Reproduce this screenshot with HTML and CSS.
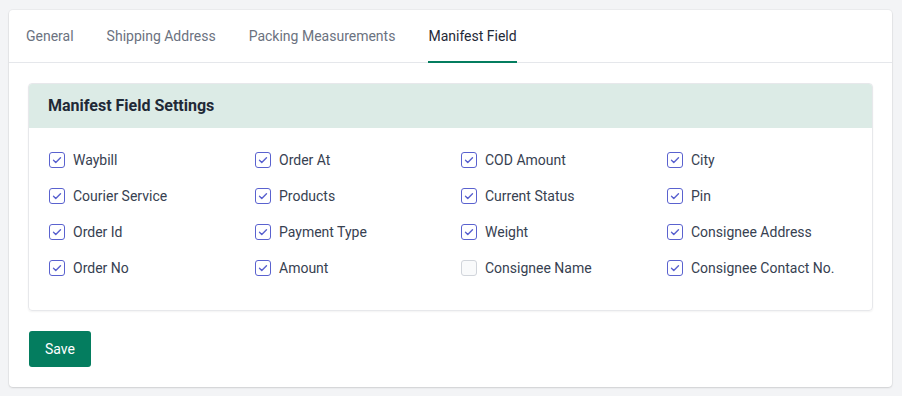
FILE: index.html
```html
<!DOCTYPE html>
<html>
	<head>
		<meta charset="UTF-8">
		<meta name="viewport" content="width=device-width, initial-scale=1.0">
		<title>Manifest Field</title>
		<link rel="stylesheet" href="styles.css">
	</head>

	<body>
		<div class="card">
			<nav class="tabs">
				<a class="tab">General</a>
				<a class="tab">Shipping Address</a>
				<a class="tab">Packing Measurements</a>
				<a class="tab active">Manifest Field</a>
			</nav>
			<div class="card-body">
				<section class="panel">
					<div class="panel-head">Manifest Field Settings</div>
					<div class="fields">
						<label class="field"><span class="box on"><svg viewBox="0 0 16 16"><path d="M4 8.3l2.6 2.6L12 5.4"/></svg></span>Waybill</label>
						<label class="field"><span class="box on"><svg viewBox="0 0 16 16"><path d="M4 8.3l2.6 2.6L12 5.4"/></svg></span>Order At</label>
						<label class="field"><span class="box on"><svg viewBox="0 0 16 16"><path d="M4 8.3l2.6 2.6L12 5.4"/></svg></span>COD Amount</label>
						<label class="field"><span class="box on"><svg viewBox="0 0 16 16"><path d="M4 8.3l2.6 2.6L12 5.4"/></svg></span>City</label>

						<label class="field"><span class="box on"><svg viewBox="0 0 16 16"><path d="M4 8.3l2.6 2.6L12 5.4"/></svg></span>Courier Service</label>
						<label class="field"><span class="box on"><svg viewBox="0 0 16 16"><path d="M4 8.3l2.6 2.6L12 5.4"/></svg></span>Products</label>
						<label class="field"><span class="box on"><svg viewBox="0 0 16 16"><path d="M4 8.3l2.6 2.6L12 5.4"/></svg></span>Current Status</label>
						<label class="field"><span class="box on"><svg viewBox="0 0 16 16"><path d="M4 8.3l2.6 2.6L12 5.4"/></svg></span>Pin</label>

						<label class="field"><span class="box on"><svg viewBox="0 0 16 16"><path d="M4 8.3l2.6 2.6L12 5.4"/></svg></span>Order Id</label>
						<label class="field"><span class="box on"><svg viewBox="0 0 16 16"><path d="M4 8.3l2.6 2.6L12 5.4"/></svg></span>Payment Type</label>
						<label class="field"><span class="box on"><svg viewBox="0 0 16 16"><path d="M4 8.3l2.6 2.6L12 5.4"/></svg></span>Weight</label>
						<label class="field"><span class="box on"><svg viewBox="0 0 16 16"><path d="M4 8.3l2.6 2.6L12 5.4"/></svg></span>Consignee Address</label>

						<label class="field"><span class="box on"><svg viewBox="0 0 16 16"><path d="M4 8.3l2.6 2.6L12 5.4"/></svg></span>Order No</label>
						<label class="field"><span class="box on"><svg viewBox="0 0 16 16"><path d="M4 8.3l2.6 2.6L12 5.4"/></svg></span>Amount</label>
						<label class="field"><span class="box"></span>Consignee Name</label>
						<label class="field"><span class="box on"><svg viewBox="0 0 16 16"><path d="M4 8.3l2.6 2.6L12 5.4"/></svg></span>Consignee Contact No.</label>
					</div>
				</section>
				<button class="btn-save">Save</button>
			</div>
		</div>
	</body>
</html>
```

FILE: styles.css
```css
* {
	padding: 0;
	margin: 0;
	box-sizing: border-box;
}

body {
	background: #f3f4f6;
	padding: 10px 10px 9px 9px;
	font-family: Roboto, "Liberation Sans", sans-serif;
	font-size: 14px;
	color: #374151;
}

.card {
	background: #fff;
	border-radius: 4px;
	box-shadow: 0 1px 2px rgba(0, 0, 0, 0.12), 0 0 0 1px rgba(0, 0, 0, 0.03);
}

.tabs {
	display: flex;
	gap: 33px;
	padding: 0 17px;
	border-bottom: 1px solid #e5e7eb;
}

.tab {
	padding: 16px 0 15px;
	line-height: 20px;
	color: #6b7280;
	border-bottom: 2px solid transparent;
	margin-bottom: -1px;
}

.tab.active {
	color: #1f2937;
	border-bottom-color: #047d5f;
}

.card-body {
	padding: 20px 19px;
}

.panel {
	border: 1px solid #e7e8eb;
	border-radius: 4px;
	box-shadow: 0 1px 2px rgba(0, 0, 0, 0.05);
	overflow: hidden;
}

.panel-head {
	background: #dcebe6;
	padding: 12px 19px;
	height: 44px;
	line-height: 20px;
	font-size: 16px;
	font-weight: 700;
	color: #1f2937;
}

.fields {
	display: grid;
	grid-template-columns: repeat(4, 206px);
	row-gap: 16px;
	padding: 22px 20px 32px;
}

.field {
	display: flex;
	align-items: center;
	gap: 8px;
	line-height: 20px;
	color: #374151;
}

.box {
	width: 16px;
	height: 16px;
	border: 1px solid #d1d5db;
	border-radius: 3px;
	background: #f9fafb;
	display: flex;
	align-items: center;
	justify-content: center;
}

.box.on {
	background: #fff;
	border: 1.5px solid #5a62cf;
}

.box svg {
	width: 14px;
	height: 14px;
	fill: none;
	stroke: #5a62cf;
	stroke-width: 1.6;
	stroke-linecap: round;
	stroke-linejoin: round;
}

.btn-save {
	margin: 20px 0 0 1px;
	height: 36px;
	padding: 0 16px;
	border: none;
	border-radius: 3px;
	background: #047d5f;
	color: #fff;
	font-family: Roboto, "Liberation Sans", sans-serif;
	font-size: 14px;
}
```
